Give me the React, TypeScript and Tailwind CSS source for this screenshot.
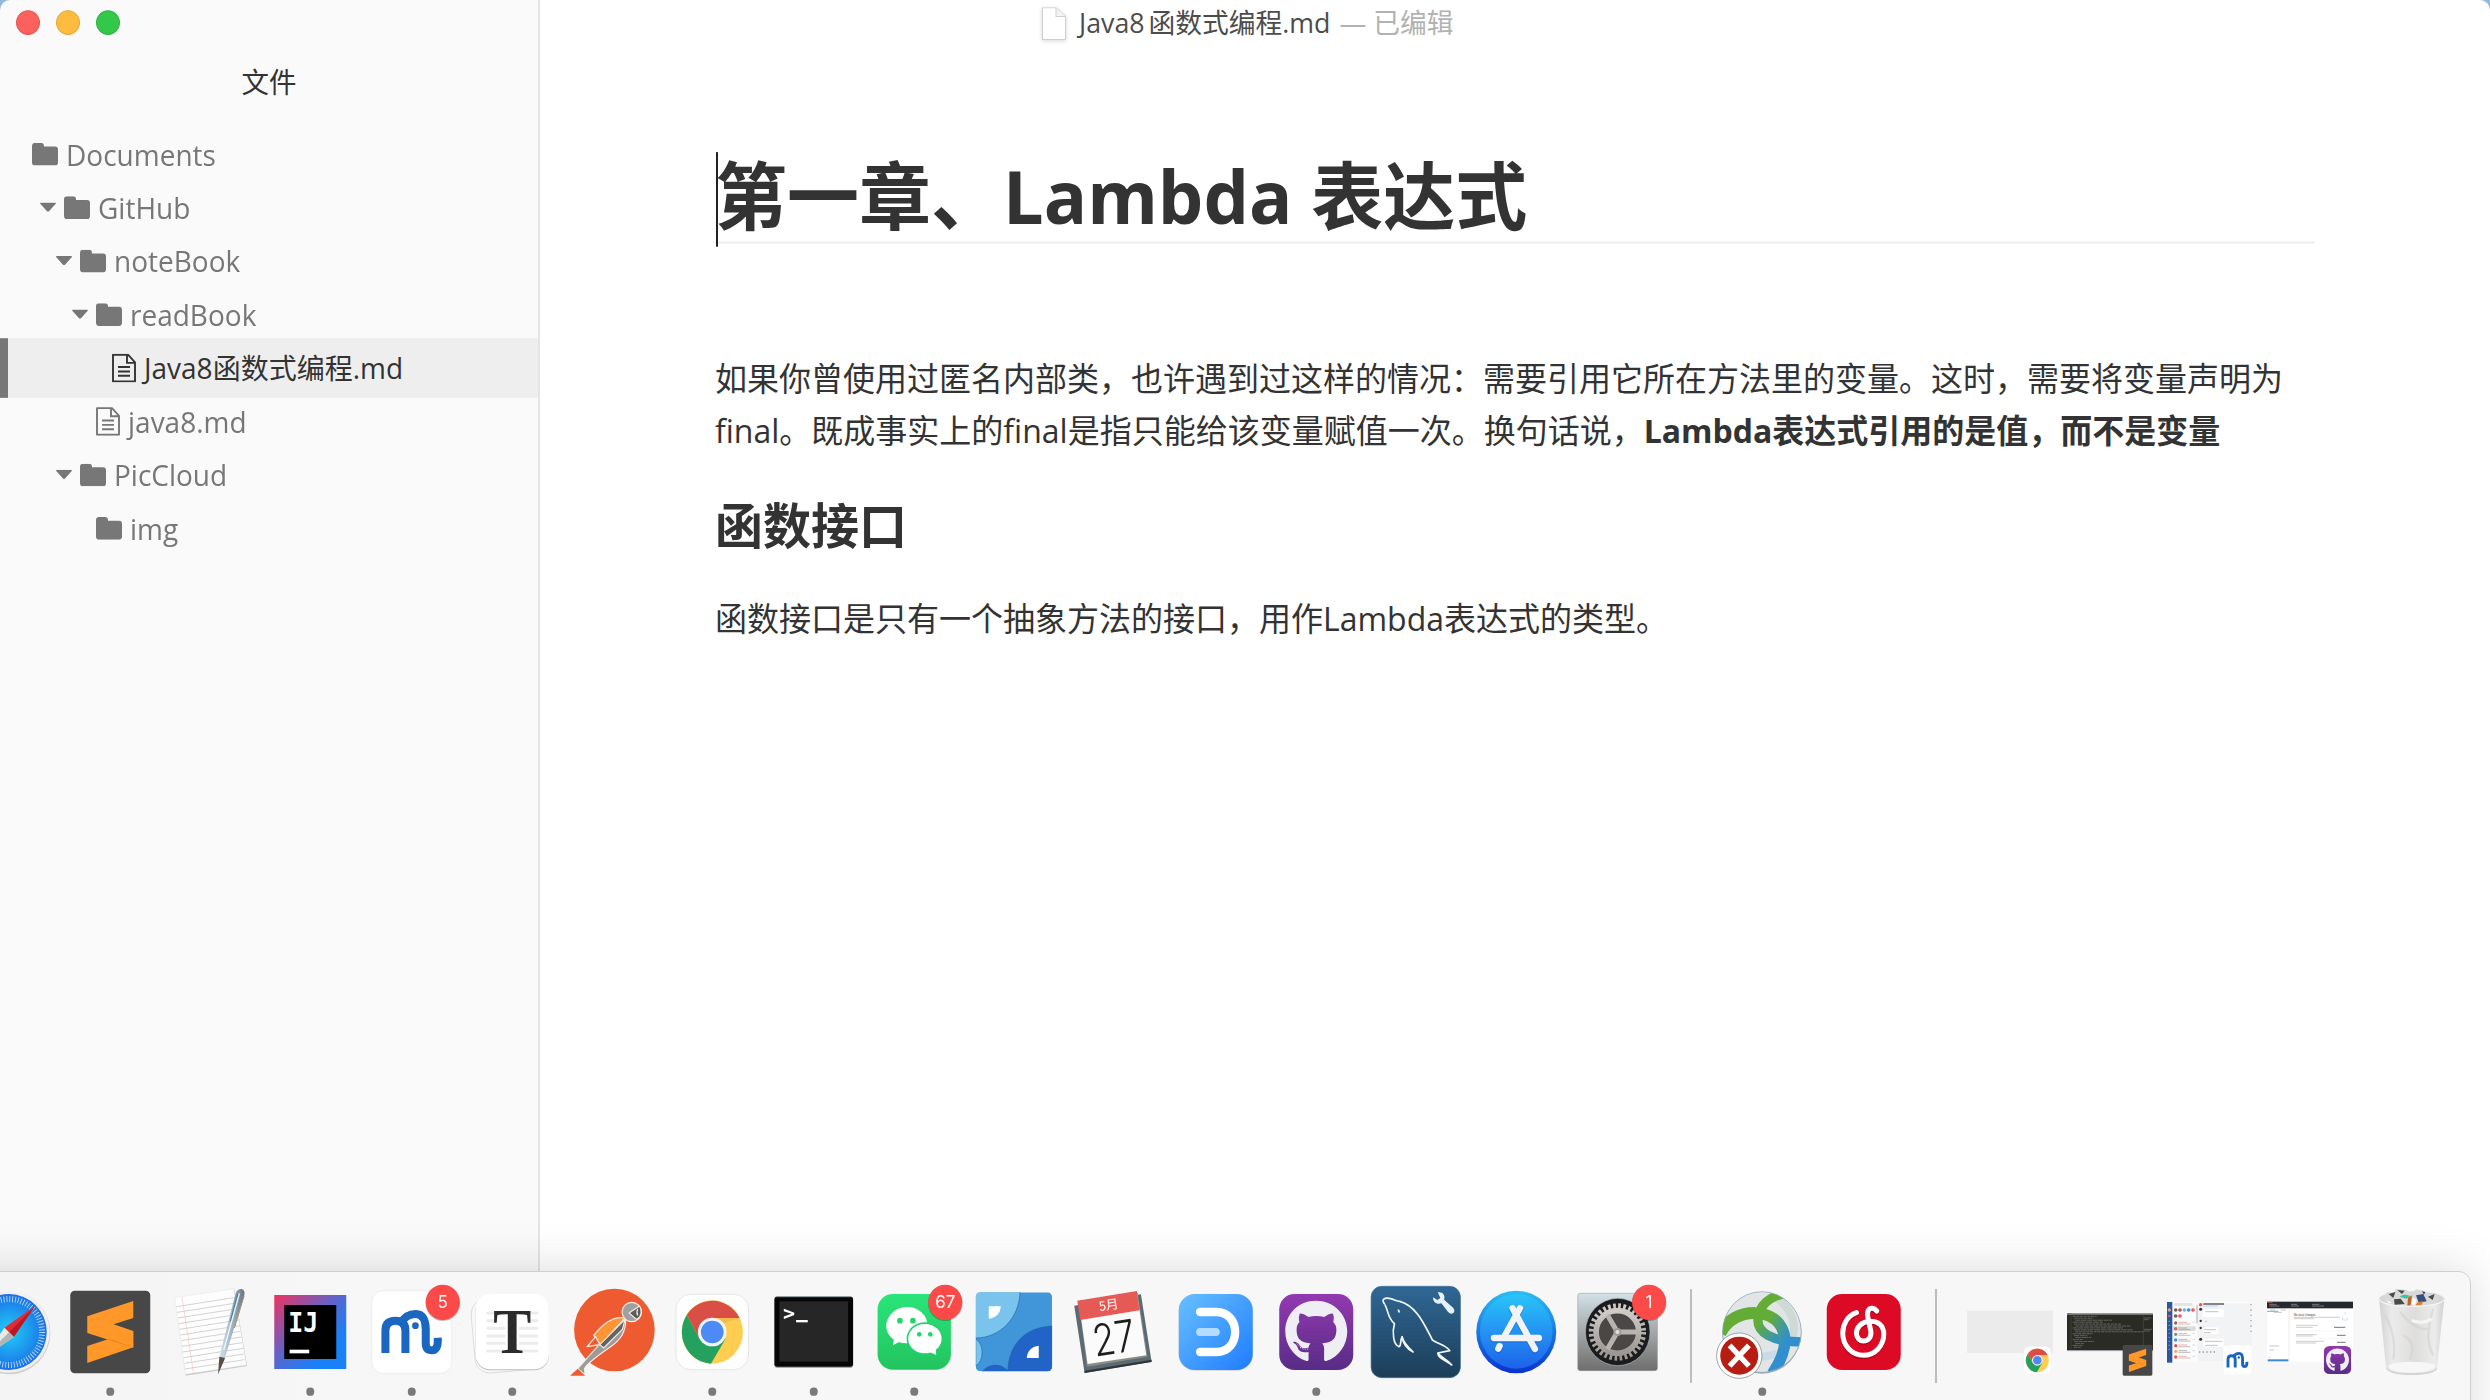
import type { ReactNode } from "react";
import { FaGithub } from "react-icons/fa";

const uiFont = "font-['Open_Sans','Noto_Sans_CJK_SC',sans-serif]";

/* ---------- Sidebar ---------- */

function FolderIcon() {
  return (
    <svg className="h-[22px] w-[26px] shrink-0" viewBox="0 0 26 22" fill="#777">
      <path d="M0 3Q0 0 3 0H9Q12 0 12 3V3.5H23Q26 3.5 26 6.5V19Q26 22 23 22H3Q0 22 0 19Z" />
    </svg>
  );
}

function FileIcon() {
  return (
    <svg className="h-7 w-6 shrink-0" viewBox="0 0 24 28" fill="none" stroke="currentColor" strokeWidth="1.9">
      <path d="M1 1H16L23 8.5V27H1Z" strokeLinejoin="round" />
      <path d="M15 1V9H23M6 13H18M6 17.3H18M6 21.5H18" />
    </svg>
  );
}

type Row = { name: string; pad: string; kind: "folder" | "file"; open?: boolean; active?: boolean };

const rows: Row[] = [
  { name: "Documents", pad: "pl-2", kind: "folder" },
  { name: "GitHub", pad: "pl-10", kind: "folder", open: true },
  { name: "noteBook", pad: "pl-14", kind: "folder", open: true },
  { name: "readBook", pad: "pl-[72px]", kind: "folder", open: true },
  { name: "Java8函数式编程.md", pad: "pl-[88px]", kind: "file", active: true },
  { name: "java8.md", pad: "pl-[72px]", kind: "file" },
  { name: "PicCloud", pad: "pl-14", kind: "folder", open: true },
  { name: "img", pad: "pl-[72px]", kind: "folder" },
];

function TreeRow({ row }: { row: Row }) {
  const tone = row.active ? "text-[#333]" : "text-[#777]";
  return (
    <div className={`relative flex h-[52px] items-center whitespace-nowrap ${row.pad} ${tone}`}>
      {row.active && (
        <div className="absolute inset-x-0 -top-[3px] h-[58px] border-l-8 border-[#777] bg-[#eee]" />
      )}
      <div className="relative flex items-center">
        <div className="w-6 shrink-0">
          {row.open && (
            <svg className="h-[9px] w-4" viewBox="0 0 16 9" fill="#777">
              <path d="M1 0H15Q16.500 0 15.500 1.500L9 8.500Q8 9.500 7 8.500L0.500 1.500Q-.5 0 1 0Z" />
            </svg>
          )}
        </div>
        {row.kind === "folder" ? <FolderIcon /> : <FileIcon />}
        <span className="ml-2 text-[28px] leading-[52px]">{row.name}</span>
      </div>
    </div>
  );
}

function Sidebar() {
  return (
    <aside className="h-full w-[540px] shrink-0 border-r-2 border-[#e4e4e4] bg-[#fafafa]">
      <div className="flex gap-4 pt-[10px] pl-4">
        <i className="size-6 rounded-full border border-[#e8524c] bg-[#fc615d]" />
        <i className="size-6 rounded-full border border-[#e3a93a] bg-[#fdbc40]" />
        <i className="size-6 rounded-full border border-[#2fb143] bg-[#34c84a]" />
      </div>
      <h2 className="mt-[21px] text-center text-[27.5px] leading-[50px] text-[#333]">文件</h2>
      <nav className="mt-[18.5px]">
        {rows.map((r) => (
          <TreeRow key={r.name} row={r} />
        ))}
      </nav>
    </aside>
  );
}

/* ---------- Editor ---------- */

function Editor() {
  return (
    <main className="flex-1 bg-white text-[#333]">
      <header className="flex h-[45px] items-center pl-[502px] text-[26.75px]">
        <svg className="h-8 w-6 drop-shadow-sm" viewBox="0 0 24 32" fill="#fff" stroke="#cfcfcf">
          <path d="M.5 .5H14L23.500 9V31.500H.5Z" />
          <path d="M14 .5V9H23.500" fill="#f3f3f3" />
        </svg>
        <span className="ml-[13px] flex text-[#4c4c4c]">
          <span>Java8</span>
          <span className="ml-1">函数式编程.md</span>
        </span>
        <span className="ml-[9px] text-[#b2b2b2]">— 已编辑</span>
      </header>
      <article className="mt-[101px] ml-[175px] w-[1600px]">
        <h1 className="relative h-[91px] text-[72px] leading-[89px] font-bold">
          <i className="absolute right-0 bottom-0 left-[1px] h-[2px] bg-[#eee]" />
          <i className="absolute top-[2px] left-[1px] h-[92px] w-[2px] bg-[#222]" />
          第一章、Lambda 表达式
        </h1>
        <p className="mt-[106px] text-[32px] leading-[50.6px] whitespace-nowrap">
          如果你曾使用过匿名内部类，也许遇到过这样的情况：需要引用它所在方法里的变量。这时，需要将变量声明为
          <br />
          final。既成事实上的final是指只能给该变量赋值一次。换句话说，
          <strong>Lambda表达式引用的是值，而不是变量</strong>
        </p>
        <h2 className="mt-[37px] text-[48px] leading-[60px] font-bold">函数接口</h2>
        <p className="mt-[34.5px] text-[32px] leading-[51px]">函数接口是只有一个抽象方法的接口，用作Lambda表达式的类型。</p>
      </article>
    </main>
  );
}

/* ---------- Dock artwork ---------- */

function SublimeArt() {
  return (
    <g>
      <rect x="210" y="92" width="240" height="248" rx="14" fill="#474747" />
      <path d="M261 258L399 213V262L261 309Z" fill="#ff9829" />
      <path d="M261 169L399 123V174L340 193L399 213V263L261 219Z" fill="#ff9829" />
      <path d="M315 236L399 263L340 240Z" fill="#e8841a" />
    </g>
  );
}

function MindArt() {
  return (
    <g>
      <rect x="1116" y="92" width="240" height="248" rx="34" fill="#fff" stroke="#e6e6e6" strokeWidth="2" />
      <g fill="none" stroke="#1a66c0" strokeWidth="24">
        <path d="M1157 279V212Q1157 182 1187 182Q1217 182 1217 212V279" />
        <path d="M1203 190C1215 168 1232 162 1248 162C1270 162 1278 182 1278 208V250Q1278 271 1297 271Q1316 271 1314 233" />
      </g>
      <circle cx="1247" cy="197" r="10" fill="#1a66c0" />
    </g>
  );
}

function ChromeArt() {
  return (
    <g>
      <rect x="707" y="103" width="218" height="226" rx="44" fill="#fefefe" stroke="#ddd" strokeWidth="2" />
      <ellipse cx="816" cy="216" rx="92" ry="95" fill="#ffcd50" />
      <path d="M740 164A92 95 0 0 0 812 311L856 236L816 216L777 235Z" fill="#24a05f" />
      <path d="M740 164A92 95 0 0 1 898 174H816L777 235Z" fill="#d94f46" />
      <path d="M816 174H898L850 190Z" fill="#e8a93f" opacity=".5" />
      <circle cx="816" cy="216" r="43" fill="#f3f3f3" />
      <circle cx="816" cy="216" r="34" fill="#4c8bf5" />
    </g>
  );
}

function GitHubArt() {
  return (
    <g>
      <defs>
        <linearGradient id="ghBg" x2="0" y2="1">
          <stop stopColor="#9339b0" />
          <stop offset="1" stopColor="#582c86" />
        </linearGradient>
      </defs>
      <rect x="27" y="102" width="222" height="228" rx="46" fill="url(#ghBg)" />
      <g transform="translate(42 119)" color="#eeeef4">
        <FaGithub size={192} />
      </g>
    </g>
  );
}

function Badge({ x, y, children }: { x: number; y: number; children: string }) {
  return (
    <g>
      <ellipse cx={x} cy={y + 2} rx="52" ry="54" fill="#000" opacity=".25" />
      <ellipse cx={x} cy={y} rx="51" ry="53" fill="#fb4a48" />
      <text x={x} y={y + 18} textAnchor="middle" fontSize="51" fill="#fff" className="font-[Inter,sans-serif]">
        {children}
      </text>
    </g>
  );
}

function Cell({ vb, top = 36, dot, children }: { vb: number; top?: number; dot?: number; children: ReactNode }) {
  return (
    <svg className="h-32 w-[100.5px] shrink-0 overflow-visible" viewBox={`${vb} ${top} 301.5 384`}>
      {children}
      {dot !== undefined && <ellipse cx={dot} cy="395" rx="12" ry="12.500" fill="#7a7a7a" />}
    </svg>
  );
}

const range = (n: number) => Array.from({ length: n }, (_, i) => i);

function Safari() {
  return (
    <Cell vb={-122.25}>
      <defs>
        <radialGradient id="saf">
          <stop stopColor="#1fd0f5" />
          <stop offset="1" stopColor="#1c6fe8" />
        </radialGradient>
      </defs>
      <circle cx="28" cy="219" r="124" fill="#cfcfcf" />
      <circle cx="28" cy="216" r="122" fill="#f1f1f1" />
      <ellipse cx="28" cy="216" rx="113" ry="114" fill="url(#saf)" />
      <circle cx="28" cy="216" r="99" fill="none" stroke="#e6f6ff" strokeWidth="18" strokeDasharray="2.600 6.040" opacity=".8" />
      <path d="M106 138L14 203L42 231Z" fill="#e52a35" />
      <path d="M106 138L28 217L42 231Z" fill="#b81a24" />
      <path d="M-50 294L14 203L42 231Z" fill="#e9e9e9" />
      <path d="M-50 294L28 217L42 231Z" fill="#b4b4b4" />
    </Cell>
  );
}

function TextEdit() {
  return (
    <Cell vb={480.75}>
      <defs>
        <linearGradient id="pen" x1="0" x2="1">
          <stop stopColor="#d6e6ee" />
          <stop offset=".5" stopColor="#a3b8c3" />
          <stop offset="1" stopColor="#66757e" />
        </linearGradient>
      </defs>
      <path d="M527 116L703 88L742 318L558 347Z" fill="#000" opacity=".18" />
      <path d="M525 113L702 86L740 315L557 343Z" fill="#fdfdfd" stroke="#dcdcdc" />
      {range(12).map((i) => (
        <path key={i} d={`M${530 + i * 2.4} ${140 + i * 17}L${708 + i * 2.4} ${112 + i * 17}`} stroke="#bcbcbc" strokeWidth="2" />
      ))}
      <path d="M547 112L581 338" stroke="#f3b6b0" strokeWidth="1.500" />
      <path d="M708 98Q714 86 726 87Q736 90 734 104L676 292L655 342L659 290Z" fill="url(#pen)" />
      <path d="M714 102L692 184" stroke="#4a7fa8" strokeWidth="4" />
      <path d="M719 100L672 270" stroke="#eef6fa" strokeWidth="4" />
      <path d="M733 108L704 204" stroke="#b08a6a" strokeWidth="3" />
      <path d="M659 290L676 294L655 343Z" fill="#5c4a46" />
    </Cell>
  );
}

function Idea() {
  return (
    <Cell vb={782.25} dot={930}>
      <defs>
        <linearGradient id="ij" x2="1" y2="1">
          <stop stopColor="#f0325f" />
          <stop offset=".5" stopColor="#4e6ad6" />
          <stop offset=".75" stopColor="#1a80f8" />
        </linearGradient>
      </defs>
      <rect x="822" y="105" width="216" height="222" fill="url(#ij)" />
      <rect x="852" y="135" width="156" height="162" fill="#000" />
      <text x="864" y="216" fontSize="82" fontWeight="700" fill="#fff" textLength="90" lengthAdjust="spacingAndGlyphs" className="font-['DejaVu_Sans_Mono',monospace]">
        IJ
      </text>
      <rect x="868" y="269" width="59" height="11" fill="#fff" />
    </Cell>
  );
}

function Typora() {
  return (
    <Cell vb={65.25} dot={216}>
      <rect x="98" y="112" width="212" height="222" rx="44" fill="#f8f8f8" stroke="#cfcfcf" strokeWidth="2" transform="rotate(-5 204 220)" />
      <rect x="106" y="105" width="220" height="226" rx="44" fill="#bdbdbd" />
      <rect x="106" y="102" width="220" height="226" rx="44" fill="#fff" />
      {[159, 182, 205, 228, 250, 273].map((y) => (
        <path key={y} d={`M142 ${y}H${y < 190 ? 168 : 192}M${y < 190 ? 268 : 240} ${y}H290`} stroke="#ececec" strokeWidth="9" strokeLinecap="round" />
      ))}
      <text x="216" y="279" textAnchor="middle" fontSize="190" fontWeight="700" fill="#2c2c2c" textLength="114" lengthAdjust="spacingAndGlyphs" className="font-['Liberation_Serif',serif]">
        T
      </text>
    </Cell>
  );
}

function Postman() {
  return (
    <Cell vb={366.75}>
      <ellipse cx="524" cy="210" rx="121" ry="124" fill="#ef5b30" />
      <g stroke="#f7ece4" strokeWidth="3.500" strokeLinejoin="round">
        <path d="M558 178C558 215 545 238 510 262C470 290 442 310 434 326L436 345L414 326L462 272L500 230Z" fill="#9b9b9b" />
        <path d="M462 226C490 190 520 168 556 174L482 254L466 232Z" fill="#ff9433" />
        <path d="M556 178L480 254L492 264L548 208Z" fill="#636363" />
        <path d="M468 230L442 260L480 254Z" fill="#ef5b30" />
        <circle cx="576" cy="156" r="29" fill="#a0a0a0" />
        <path d="M599 138L568 159L590 178Q604 172 604 156Q604 146 599 138Z" fill="#5c5c5c" />
        <path d="M594 146Q589 158 594 166" fill="none" />
      </g>
      <path d="M391 347L414 326L436 347Z" fill="#ef5b30" />
    </Cell>
  );
}

function Terminal() {
  return (
    <Cell vb={969.75} dot={1122}>
      <rect x="1004" y="114" width="236" height="210" rx="8" fill="#000" opacity=".3" />
      <rect x="1004" y="110" width="236" height="210" rx="7" fill="#060606" />
      <rect x="1019" y="124" width="206" height="181" fill="#262626" />
      <path d="M1008 111H1236" stroke="#4e6472" strokeWidth="2" />
      <text x="1030" y="179" fontSize="60" fontWeight="700" fill="#fff" className="font-['DejaVu_Sans_Mono',monospace]">
        &gt;
      </text>
      <rect x="1069" y="180" width="35" height="7" fill="#fff" />
    </Cell>
  );
}

function WeChat() {
  return (
    <Cell vb={11.25} dot={162}>
      <defs>
        <linearGradient id="wx" x2="0" y2="1">
          <stop stopColor="#2ae57a" />
          <stop offset="1" stopColor="#22c45f" />
        </linearGradient>
      </defs>
      <rect x="52" y="102" width="220" height="227" rx="46" fill="url(#wx)" />
      <path d="M98 256L101 236A61 54 0 1 1 118 245Z" fill="#fff" />
      <ellipse cx="138" cy="198" rx="60" ry="52" fill="#fff" />
      <circle cx="119" cy="182" r="8.500" fill="#26d26b" />
      <circle cx="158" cy="182" r="8.500" fill="#26d26b" />
      <ellipse cx="194" cy="236" rx="55" ry="49" fill="#26d26b" />
      <ellipse cx="194" cy="236" rx="50" ry="44" fill="#fff" />
      <path d="M208 276L228 285L225 262Z" fill="#fff" />
      <circle cx="177" cy="223" r="7" fill="#26d26b" />
      <circle cx="210" cy="223" r="7" fill="#26d26b" />
      <Badge x={255} y={127}>67</Badge>
    </Cell>
  );
}

function BlueTiles() {
  return (
    <Cell vb={312.75}>
      <clipPath id="tiles">
        <rect x="348" y="97" width="229" height="237" rx="14" />
      </clipPath>
      <g clipPath="url(#tiles)" stroke="#2069ad" strokeWidth="2">
        <rect x="348" y="97" width="229" height="237" fill="#4196da" stroke="none" />
        <path d="M340 90H481C481 175 420 234 348 234H340Z" fill="#79c3ec" />
        <path d="M348 236Q367 250 367 276Q367 306 348 318Z" fill="#79c3ec" />
        <path d="M585 198C500 198 444 250 444 340H585Z" fill="#2163c6" />
        <path d="M368 334Q385 315 407 315Q428 315 443 331V340H368Z" fill="#2163c6" />
      </g>
      <path d="M387 139H423C422 160 410 174 387 176Z" fill="#fff" />
      <path d="M537 257V294H501C502 274 515 259 537 257Z" fill="#fff" />
    </Cell>
  );
}

function Calendar() {
  return (
    <Cell vb={614.25}>
      <path d="M642 137L842 103L874 305L673 339Z" fill="#5b6b74" />
      <path d="M673 332L874 299V306L673 339Z" fill="#2f3538" />
      <path d="M656 128L832 98L862 290L680 320Z" fill="#8d8d86" />
      <path d="M656 128L830 98L858 286L682 312Z" fill="#fbfbfb" />
      <path d="M651 122L830 93L838 151L660 180Z" fill="#e65a55" />
      <g transform="rotate(-9 750 210)">
        <text x="757" y="149" textAnchor="middle" fontSize="38" fill="#fff" className="font-['Noto_Sans_CJK_SC',sans-serif]">
          5月
        </text>
        <text x="757" y="282" textAnchor="middle" fontSize="132" fontWeight="300" fill="#1d1d1d" textLength="128" lengthAdjust="spacingAndGlyphs" className="font-[Inter,sans-serif]">
          27
        </text>
      </g>
    </Cell>
  );
}

function DingDocs() {
  return (
    <Cell vb={915.75}>
      <defs>
        <linearGradient id="dd" x2="1" y2="1">
          <stop stopColor="#68c0ff" />
          <stop offset="1" stopColor="#1f7cff" />
        </linearGradient>
      </defs>
      <rect x="957" y="104" width="222" height="228" rx="48" fill="#000" opacity=".15" />
      <rect x="957" y="102" width="222" height="228" rx="48" fill="url(#dd)" />
      <path d="M1021 156H1070C1145 156 1145 276 1070 276H1021" fill="none" stroke="#fff" strokeWidth="25" strokeLinecap="round" />
      <path d="M1021 216H1068" stroke="#b5dcff" strokeWidth="24" strokeLinecap="round" />
    </Cell>
  );
}

function Workbench() {
  return (
    <Cell vb={288.75}>
      <defs>
        <linearGradient id="wb" x2="0" y2="1">
          <stop stopColor="#2f6794" />
          <stop offset="1" stopColor="#1d3e59" />
        </linearGradient>
      </defs>
      <rect x="304" y="79" width="268" height="274" rx="32" fill="url(#wb)" stroke="#3f6f96" strokeWidth="2" />
      <path d="M345 133C333 118 345 113 358 115C372 117 378 123 390 124C440 138 462 190 488 240C505 252 530 255 540 272L504 279C515 292 535 300 546 315C528 300 505 296 504 279" fill="none" stroke="#f2f8fc" strokeWidth="5" strokeLinejoin="round" />
      <path d="M345 133C356 150 352 172 374 191C367 215 370 255 388 260C395 258 391 240 397 230C402 250 415 262 430 276C414 268 400 252 397 230" fill="none" stroke="#f2f8fc" strokeWidth="5" strokeLinejoin="round" />
      <path d="M384 147Q393 150 389 159Q383 157 384 147Z" fill="#f2f8fc" />
      <path d="M504 97C518 94 528 106 523 119L550 143Q557 153 551 159Q543 164 535 156L515 130C502 135 489 127 490 112L503 120L512 114Z" fill="#e6f3fc" />
    </Cell>
  );
}

function AppStore() {
  return (
    <Cell vb={590.25}>
      <defs>
        <linearGradient id="as" x2="0" y2="1">
          <stop stopColor="#2ac5fa" />
          <stop offset="1" stopColor="#1d62ea" />
        </linearGradient>
        <linearGradient id="asRim" x2="0" y2="1">
          <stop stopColor="#2abdf5" />
          <stop offset="1" stopColor="#0b32cf" />
        </linearGradient>
      </defs>
      <ellipse cx="738" cy="216" rx="120" ry="124" fill="url(#asRim)" />
      <ellipse cx="738" cy="214" rx="109" ry="112" fill="url(#as)" />
      <g stroke="#1550b8" strokeWidth="22" strokeLinecap="round" opacity=".35" transform="translate(0 3)">
        <path d="M671 234H804M748 146L704 226M727 146L794 267M688 259L684 266" />
      </g>
      <g stroke="#f2f3f5" strokeWidth="19" strokeLinecap="round">
        <path d="M727 145L794 267" />
        <path d="M671 234H806" />
        <path d="M749 145L704 226M688 258L684 266" />
      </g>
    </Cell>
  );
}

function Settings() {
  return (
    <Cell vb={891.75}>
      <defs>
        <linearGradient id="sp" x2="0" y2="1">
          <stop stopColor="#d2e1e7" />
          <stop offset=".6" stopColor="#9a9b9c" />
          <stop offset="1" stopColor="#6e6e6e" />
        </linearGradient>
        <linearGradient id="gear" x2="0" y2="1">
          <stop stopColor="#d0ccc8" />
          <stop offset="1" stopColor="#9a9794" />
        </linearGradient>
      </defs>
      <rect x="924" y="100" width="239" height="232" rx="7" fill="url(#sp)" stroke="#8f9599" strokeWidth="1.500" />
      <ellipse cx="1044" cy="216" rx="97" ry="101" fill="#1c1c1e" stroke="#a9b8c2" strokeWidth="2" />
      <circle cx="1043" cy="216" r="78" fill="none" stroke="url(#gear)" strokeWidth="16" strokeDasharray="8 7.317" />
      <circle cx="1043" cy="216" r="64" fill="#4a4746" stroke="url(#gear)" strokeWidth="17" />
      <path d="M1043 216H1102M1043 216L1013 165M1043 216L1013 267" stroke="#b8b4b0" strokeWidth="15" />
      <circle cx="1043" cy="216" r="12" fill="#a09d9a" />
      <circle cx="1043" cy="216" r="6" fill="#dedede" />
      <Badge x={1138} y={127}>1</Badge>
    </Cell>
  );
}

function AnyConnect() {
  return (
    <Cell vb={155.25} dot={306}>
      <defs>
        <linearGradient id="gb" x2="1" y2="1">
          <stop offset=".3" stopColor="#63ad36" />
          <stop offset=".75" stopColor="#2f8fd0" />
        </linearGradient>
        <clipPath id="ball">
          <ellipse cx="305" cy="216" rx="118" ry="121" />
        </clipPath>
      </defs>
      <ellipse cx="305" cy="218" rx="119" ry="123" fill="#9aa5ac" />
      <ellipse cx="305" cy="216" rx="118" ry="121" fill="#e2e5e6" />
      <g clipPath="url(#ball)" fill="none">
        <path d="M345 110C400 150 410 200 395 235" stroke="#cfdad7" strokeWidth="24" />
        <path d="M240 285Q300 300 350 280" stroke="#c8dbe8" strokeWidth="24" />
        <path d="M180 220C200 180 240 158 285 159" stroke="#63ad36" strokeWidth="36" />
        <path d="M375 100C330 108 295 135 293 180C292 215 330 246 430 246" stroke="url(#gb)" strokeWidth="28" />
        <path d="M278 160C345 155 420 215 336 342" stroke="url(#gb)" strokeWidth="34" />
      </g>
      <ellipse cx="305" cy="216" rx="118" ry="121" fill="none" stroke="#8ea9bc" strokeWidth="2" />
      <circle cx="237" cy="287" r="68" fill="#fff" stroke="#777" strokeWidth="2" />
      <circle cx="237" cy="287" r="57" fill="#b71d12" />
      <path d="M208 256L266 318M266 256L208 318" stroke="#fff" strokeWidth="16" />
    </Cell>
  );
}

function NetEase() {
  return (
    <Cell vb={456.75}>
      <rect x="501" y="102" width="222" height="228" rx="46" fill="#dc0a24" />
      <g fill="none" strokeWidth="15" strokeLinecap="round">
        {["#a80318", "#fff"].map((c, i) => (
          <path
            key={c}
            stroke={c}
            transform={i ? "" : "translate(0 4)"}
            d="M590 158C562 168 549 194 549 220C549 258 577 286 611 286C645 286 672 258 672 222C672 196 655 183 630 184C604 186 590 202 590 220C590 234 600 243 611 243C627 243 636 230 633 212L624 170C621 152 628 144 638 145Q645 146 651 153"
          />
        ))}
      </g>
    </Cell>
  );
}

/* ---------- Minimised windows ---------- */

function ThumbChrome() {
  return (
    <Cell vb={-300} top={0}>
      <rect x="-279" y="114" width="258" height="129" fill="#ebebeb" />
      <path d="M-279 114H-21" stroke="#f7f7f7" strokeWidth="4" />
      <svg x="-110" y="222" width="84" height="86" viewBox="705 101 222 230">
        <ChromeArt />
      </svg>
    </Cell>
  );
}

function ThumbSublime() {
  return (
    <Cell vb={0} top={0}>
      <rect x="21" y="123" width="258" height="114" fill="#2a2b25" />
      <rect x="21" y="123" width="258" height="5" fill="#9a9a98" />
      <path d="M21 236H279" stroke="#b9b7c0" strokeWidth="3" />
      <path d="M23 125H34" stroke="#b3564c" strokeWidth="3" />
      {[72, 58, 110, 90, 142, 168, 150, 176, 205, 60, 40, 48, 30, 60, 26, 30, 22].map((w, i) => (
        <path key={i} d={`M${38 + (i % 3) * 4} ${133 + i * 5.8}h${w}`} stroke="#8d8e86" strokeWidth="2.200" strokeDasharray={`${9 + (i % 4) * 3} 2`} opacity=".75" />
      ))}
      <path d="M33 130V232M250 130V235" stroke="#4b4c45" strokeWidth="2" />
      <path d="M252 138h22M252 143h14M252 172h24M252 177h18" stroke="#777870" strokeWidth="2" />
      <svg x="187" y="218" width="91" height="94" viewBox="209 91 242 250">
        <SublimeArt />
      </svg>
    </Cell>
  );
}

function ThumbMind() {
  return (
    <Cell vb={300} top={0}>
      <rect x="321" y="90" width="256" height="181" fill="#fbfbfb" />
      <rect x="321" y="90" width="16" height="182" fill="#2b579f" />
      <rect x="413" y="93" width="163" height="176" fill="#f2f3f4" />
      <circle cx="328" cy="114" r="5" fill="#cfa98a" />
      <circle cx="328" cy="132" r="4" fill="#e4524d" />
      {range(8).map((i) => (
        <path key={i} d={`M325 ${148 + i * 12}h6`} stroke="#8fabd6" strokeWidth="2" />
      ))}
      <rect x="343" y="93" width="54" height="9" fill="#e3e3e3" />
      {["#7d5a58", "#a45a50", "#6ab4e6", "#3c8ee8", "#f0554f"].map((c, i) => (
        <circle key={c} cx={347 + i * 13} cy="114" r="5.500" fill={c} />
      ))}
      <circle cx="347" cy="132" r="5.500" fill="#6d5c58" />
      <circle cx="360" cy="132" r="5.500" fill="#f0554f" />
      <rect x="339" y="163" width="68" height="14" fill="#dedede" />
      {["#8c6a55", "#f0554f", "#6f9a66", "#3c8ee8", "#e0554f", "#e7b252", "#f0554f"].map((c, i) => (
        <g key={i}>
          <circle cx="347" cy={153 + i * 17} r="5" fill={c} />
          <path d={`M355 ${151 + i * 17}h26M355 ${156 + i * 17}h36`} stroke={i % 2 ? "#999" : "#c99"} strokeWidth="2" />
          <path d={`M397 ${151 + i * 17}h8`} stroke="#ccc" strokeWidth="2" />
        </g>
      ))}
      <path d="M411 100V154" stroke="#bcbcbc" strokeWidth="4" />
      <circle cx="422" cy="98" r="5" fill="#f0554f" />
      <path d="M430 96h62" stroke="#4b4b4b" strokeWidth="4" />
      <path d="M430 102h44" stroke="#9cc0ea" strokeWidth="2" />
      <g fill="#fff">
        <rect x="430" y="112" width="61" height="23" />
        <rect x="430" y="200" width="61" height="24" />
        <rect x="430" y="166" width="45" height="20" />
      </g>
      <path d="M435 119h40M435 148h6M432 173h36M435 208h52M435 220h38M432 182h20" stroke="#a9a39d" strokeWidth="2" />
      <g fill="#3a3032">
        <circle cx="422" cy="112" r="4.500" />
        <circle cx="422" cy="147" r="3.500" />
        <circle cx="422" cy="168" r="3.500" />
        <circle cx="422" cy="202" r="4.500" />
      </g>
      <path d="M573 96V186" stroke="#a5a5a5" strokeWidth="4" strokeDasharray="4 12" />
      <path d="M417 240H466" stroke="#999" strokeWidth="4" strokeDasharray="4 7" />
      <svg x="487" y="218" width="91" height="91" viewBox="1114 90 244 252">
        <MindArt />
      </svg>
    </Cell>
  );
}

function ThumbGitHub() {
  return (
    <Cell vb={600} top={0}>
      <rect x="621" y="89" width="258" height="180" fill="#fff" />
      <rect x="621" y="89" width="258" height="20" fill="#25292f" />
      <path d="M622 91H638" stroke="#c0564c" strokeWidth="3" />
      <path d="M628 97h22M693 97h18M756 97h22M628 102h30M693 102h24M756 102h36" stroke="#9aa0a6" strokeWidth="2" />
      <path d="M687 109V269" stroke="#e4e4e4" strokeWidth="2" />
      <path d="M621 118H655" stroke="#3b82d6" strokeWidth="2" />
      <path d="M630 114h16M662 114h16M642 121h24M628 222h30M628 234h14M626 256h4" stroke="#aaa" strokeWidth="2" />
      <text x="702" y="132" fontSize="13" fill="#333" textLength="65" lengthAdjust="spacingAndGlyphs" className="font-['Liberation_Sans',sans-serif]">
        No local changes
      </text>
      <path d="M702 136h138M702 140h60M708 160h66M708 166h50M708 188h62M708 192h50M708 208h84M708 213h60" stroke="#b4b4b4" strokeWidth="2" />
      <path d="M822 166h34M831 190h26M831 211h26" stroke="#777" strokeWidth="3" />
      <path d="M702 177H860M702 200H860" stroke="#e8e8e8" />
      <path d="M848 136v8h14v-8M855 120v8" stroke="#b8d4ec" strokeWidth="2" fill="none" />
      <rect x="623" y="262" width="62" height="6" fill="#3f87d9" />
      <svg x="791" y="221" width="83" height="86" viewBox="26 101 224 230">
        <GitHubArt />
      </svg>
    </Cell>
  );
}

function Trash() {
  return (
    <Cell vb={900} top={0}>
      <defs>
        <linearGradient id="can" x2="1">
          <stop stopColor="#d2d2d2" />
          <stop offset=".2" stopColor="#ebebeb" />
          <stop offset=".55" stopColor="#dedddc" />
          <stop offset=".85" stopColor="#ececec" />
          <stop offset="1" stopColor="#d0d0d0" />
        </linearGradient>
      </defs>
      <path d="M978 288Q985 309 1055 309Q1126 309 1132 288Z" fill="#000" opacity=".15" />
      <path d="M957 80L978 285Q988 304 1055 304Q1122 304 1131 285L1153 80Z" fill="url(#can)" />
      <path d="M984 282Q1000 268 1055 270Q1115 268 1127 282Q1115 302 1055 302Q992 302 984 282Z" fill="#f7f7f7" />
      <path d="M975 130Q1010 190 1000 262M1020 120Q1070 180 1110 170M1030 190Q1070 210 1050 262M1120 110Q1090 200 1120 250" stroke="#cfcecd" strokeWidth="7" fill="none" opacity=".5" />
      <path d="M1055 145Q1090 158 1115 140" stroke="#f6f6f6" strokeWidth="9" fill="none" />
      <ellipse cx="1055" cy="80" rx="98" ry="23" fill="#d6d6d6" stroke="#f0f0f0" strokeWidth="3" />
      <path d="M972 82L980 60L1000 64L1008 50L1040 54L1056 66L1068 52L1092 56L1110 70L1124 62L1138 80L1124 94L1060 104L1000 100Z" fill="#d9d9d7" />
      <path d="M986 66L1006 60L1000 78ZM1012 54L1034 56L1026 66ZM1002 82L1022 80L1034 96L1004 98ZM1104 74L1124 66L1118 84ZM1086 58L1096 60L1092 68Z" fill="#4a4a4c" />
      <path d="M1018 74L1034 68L1052 72L1040 80Z" fill="#4cc76a" />
      <path d="M1022 72L1034 68L1046 70L1034 75Z" fill="#38b7e4" />
      <path d="M1044 78L1056 70L1052 100L1042 102Z" fill="#c0602f" />
      <path d="M1068 70L1090 66L1100 88L1076 92Z" fill="#39507e" />
      <path d="M1074 90L1090 88L1084 100L1066 100Z" fill="#d9822d" />
      <path d="M1058 76L1070 84L1064 102L1056 98ZM980 84L996 92L986 94Z" fill="#fff" />
      <path d="M959 86Q975 103 1055 103Q1135 103 1151 86" fill="none" stroke="#f7f7f7" strokeWidth="3" />
    </Cell>
  );
}

function Separator({ box }: { box: string }) {
  return (
    <div className={`flex h-full shrink-0 justify-center ${box}`}>
      <i className="mt-[17px] h-[94px] w-[2px] bg-[#bdbdbd]" />
    </div>
  );
}

function Dock() {
  return (
    <div className="absolute top-[1271px] left-[-60px] h-[200px] w-[2531px] rounded-[12px] border border-[#cfcfcf] bg-linear-to-r from-[#f4f4f4] to-[#f7f7f7] to-20% shadow-[0_0_50px_rgba(0,0,0,0.15)]">
      <div className="flex h-32 pl-[18.25px]">
        <Safari />
        <Cell vb={179.25} dot={330}>
          <SublimeArt />
        </Cell>
        <TextEdit />
        <Idea />
        <Cell vb={1083.75} dot={1236}>
          <MindArt />
          <Badge x={1329} y={127}>5</Badge>
        </Cell>
        <Typora />
        <Postman />
        <Cell vb={668.25} dot={816}>
          <ChromeArt />
        </Cell>
        <Terminal />
        <WeChat />
        <BlueTiles />
        <Calendar />
        <DingDocs />
        <Cell vb={-12.75} dot={138}>
          <GitHubArt />
        </Cell>
        <Workbench />
        <AppStore />
        <Settings />
        <Separator box="w-11 pl-[3px]" />
        <AnyConnect />
        <NetEase />
        <Separator box="w-[47.250px]" />
        <div className="flex shrink-0">
          <div className="w-[100px]"><ThumbChrome /></div>
          <div className="w-[100px]"><ThumbSublime /></div>
          <div className="w-[100px]"><ThumbMind /></div>
          <div className="w-[100px]"><ThumbGitHub /></div>
          <div className="w-[100px]"><Trash /></div>
        </div>
      </div>
    </div>
  );
}

export default function App() {
  return (
    <div className={`relative h-[1400px] w-[2490px] overflow-hidden bg-[#8fb8dc] ${uiFont}`}>
      <div className="flex h-[1363px] origin-top scale-y-[1.028] overflow-hidden rounded-t-[10px]">
        <Sidebar />
        <Editor />
      </div>
      <Dock />
    </div>
  );
}
